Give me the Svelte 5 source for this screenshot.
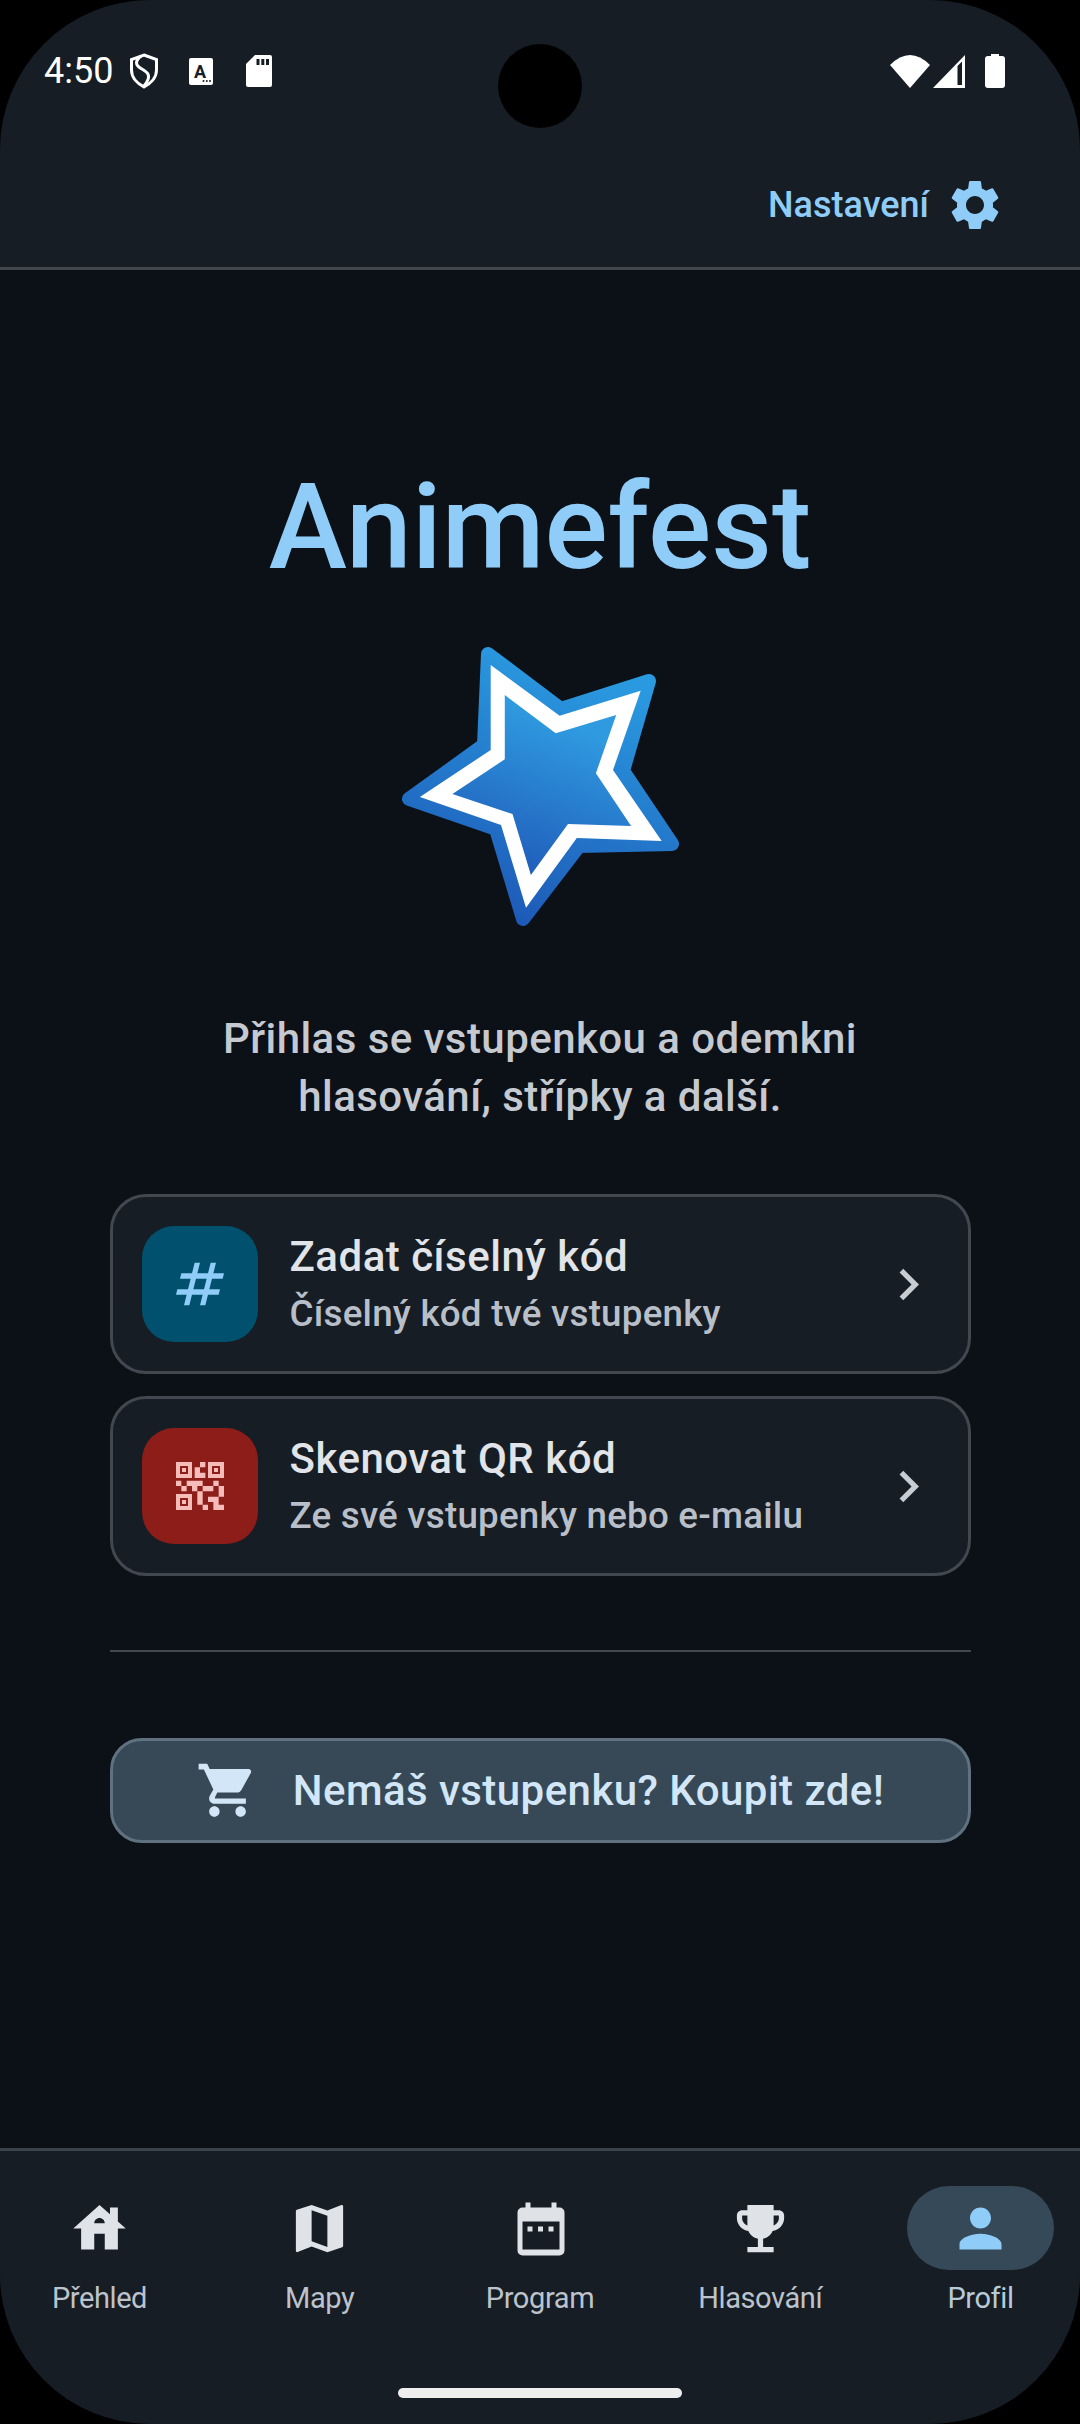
<script>
  const tabs = [
    { label: 'Přehled', d: 'M19 9.3V4h-3v2.6L12 3 2 12h3v8h5v-6h4v6h5v-8h3l-3-2.7zM10 10c0-1.1.9-2 2-2s2 .9 2 2h-4z' },
    { label: 'Mapy', d: 'M20.5 3l-.16.03L15 5.1 9 3 3.36 4.9c-.21.07-.36.25-.36.48V20.5c0 .28.22.5.5.5l.16-.03L9 18.9l6 2.1 5.64-1.9c.21-.07.36-.25.36-.48V3.5c0-.28-.22-.5-.5-.5zM15 19l-6-2.11V5l6 2.11V19z' },
    { label: 'Program', calendar: true },
    { label: 'Hlasování', d: 'M19 5h-2V3H7v2H5c-1.1 0-2 .9-2 2v1c0 2.55 1.92 4.63 4.39 4.94.63 1.5 1.98 2.63 3.61 2.96V19H7v2h10v-2h-4v-3.1c1.63-.33 2.98-1.46 3.61-2.96C19.08 12.63 21 10.55 21 8V7c0-1.1-.9-2-2-2zM5 8V7h2v3.82C5.84 10.4 5 9.3 5 8zm14 0c0 1.3-.84 2.4-2 2.82V7h2v1z' },
    { label: 'Profil', active: true, d: 'M12 12c2.21 0 4-1.79 4-4s-1.79-4-4-4-4 1.79-4 4 1.79 4 4 4zm0 2c-2.67 0-8 1.34-8 4v2h16v-2c0-2.66-5.33-4-8-4z' }
  ];

  const qr = 'M15 21h-2v-2h2v2zM13 14h-2v5h2v-5zM21 12h-2v4h2v-4zM19 10h-2v2h2v-2zM7 12H5v2h2v-2zM5 10H3v2h2v-2zM12 5h2V3h-2v2zM4.5 4.5v3h3v-3h-3zM9 9H3V3h6v6zM4.5 16.5v3h3v-3h-3zM9 21H3v-6h6v6zM16.5 4.5v3h3v-3h-3zM21 9h-6V3h6v6zM19 19v-3h-4v2h2v3h4v-2h-2zM17 12h-4v2h4v-2zM13 10H7v2h2v2h2v-2h2v-2zM14 9V7h-2V5h-2v4h4zM6.75 5.25h-1.5v1.5h1.5v-1.5zM6.75 17.25h-1.5v1.5h1.5v-1.5zM18.75 5.25h-1.5v1.5h1.5v-1.5z';
  const hash = 'M20.5 10l.5-2h-4l1-4h-2l-1 4h-4l1-4h-2L9 8H5l-.5 2h4l-1 4h-4L3 16h4l-1 4h2l1-4h4l-1 4h2l1-4h4l.5-2h-4l1-4h4zm-7 4h-4l1-4h4l-1 4z';
</script>

<div class="frame">
  <header>
    <div class="status">
      <span class="time">4:50</span>
      <svg class="shield" viewBox="0 0 30 36" width="30" height="36">
        <path d="M15 2 27.5 6.5V17C27.5 25 21 31 15 34 9 31 2.500 25 2.500 17V6.500Z" />
        <path d="M12 3C6 8 6 12 12 15.500 18 19 24 22 15 33" />
      </svg>
      <svg class="keyboard" viewBox="0 0 24 27" width="24" height="27">
        <rect width="24" height="27" rx="2" fill="#fff" />
        <text x="11" y="20" text-anchor="middle">A</text>
        <circle cx="14.500" cy="23" r="1" fill="#161d24" />
        <circle cx="17.800" cy="23" r="1" fill="#161d24" />
        <circle cx="21" cy="23" r="1" fill="#161d24" />
      </svg>
      <svg class="sd" viewBox="0 0 26 32" width="26" height="32">
        <path fill="#fff" d="M9 0H24a2 2 0 0 1 2 2V30a2 2 0 0 1-2 2H2a2 2 0 0 1-2-2V9Z" />
        <rect x="10.500" y="4" width="3" height="6" fill="#161d24" />
        <rect x="15.300" y="4" width="3" height="6" fill="#161d24" />
        <rect x="20" y="4" width="3" height="6" fill="#161d24" />
      </svg>
      <div class="status-right">
        <svg viewBox="0 0 40 33" width="40" height="33"><path fill="#fff" d="M0 10Q20-10 40 10L20 33Z" /></svg>
        <svg viewBox="0 0 33 33" width="33" height="33"><path fill="#fff" fill-rule="evenodd" d="M0 33 32 0V33ZM24.500 11V30H29V6.500Z" /></svg>
        <svg class="battery" viewBox="0 0 20 34" width="20" height="34">
          <path fill="#fff" d="M6 0H14V2H17A3 3 0 0 1 20 5V31A3 3 0 0 1 17 34H3A3 3 0 0 1 0 31V5A3 3 0 0 1 3 2H6Z" />
        </svg>
      </div>
    </div>
    <div class="bar">
      <span class="settings">Nastavení</span>
      <svg viewBox="0 0 24 24" width="60" height="60" fill="#8fcdf8">
        <path d="M19.14 12.94c.04-.3.06-.61.06-.94 0-.32-.02-.64-.07-.94l2.03-1.58c.18-.14.23-.41.12-.61l-1.92-3.32c-.12-.22-.37-.29-.59-.22l-2.39.96c-.5-.38-1.03-.7-1.62-.94l-.36-2.54c-.04-.24-.24-.41-.48-.41h-3.84c-.24 0-.43.17-.47.41l-.36 2.54c-.59.24-1.13.57-1.62.94l-2.39-.96c-.22-.08-.47 0-.59.22L2.74 8.87c-.12.21-.08.47.12.61l2.03 1.58c-.05.3-.09.63-.09.94s.02.64.07.94l-2.03 1.58c-.18.14-.23.41-.12.61l1.92 3.32c.12.22.37.29.59.22l2.39-.96c.5.38 1.03.7 1.62.94l.36 2.54c.05.24.24.41.48.41h3.84c.24 0 .44-.17.47-.41l.36-2.54c.59-.24 1.13-.56 1.62-.94l2.39.96c.22.08.47 0 .59-.22l1.92-3.32c.12-.22.07-.47-.12-.61l-2.01-1.58zM12 15.6c-1.98 0-3.6-1.62-3.6-3.6s1.62-3.6 3.6-3.6 3.6 1.62 3.6 3.6-1.62 3.6-3.6 3.6z" />
      </svg>
    </div>
  </header>

  <main>
    <h1>Animefest</h1>

    <svg class="star" viewBox="400 640 280 290" width="280" height="290">
      <defs>
        <linearGradient id="edge" gradientUnits="userSpaceOnUse" x1="590" y1="670" x2="500" y2="925">
          <stop offset="0" stop-color="#2a9ae0" />
          <stop offset="1" stop-color="#1d58b6" />
        </linearGradient>
        <linearGradient id="fill" gradientUnits="userSpaceOnUse" x1="570" y1="725" x2="510" y2="880">
          <stop offset="0" stop-color="#2f9ae0" />
          <stop offset="1" stop-color="#1f59b8" />
        </linearGradient>
      </defs>
      <polygon
        points="488,654 561,709 649,681 623,771 672,844 579,846 523,919 496,829 409,799 484,745"
        fill="url(#edge)" stroke="url(#edge)" stroke-width="14" stroke-linejoin="round"
      />
      <polygon fill="#fff" points="490.7,665 559.6,715.7 640.7,690.7 613,770 661.7,841 576.8,838 526,907.7 501,825 419.9,797 490.7,750" />
      <polygon fill="url(#fill)" points="504.8,695 555.7,733.3 616.2,715 595.9,773.3 631.1,826 568,824 530.9,875 512.5,814 452.4,794 504.8,759.3" />
    </svg>

    <p class="lead">Přihlas se vstupenkou a odemkni<br />hlasování, střípky a další.</p>

    <div class="cards">
      <div class="card">
        <div class="tile blue">
          <svg viewBox="0 0 24 24" width="64" height="64"><path d={hash} /></svg>
        </div>
        <div class="card-text">
          <div class="card-title">Zadat číselný kód</div>
          <div class="card-sub">Číselný kód tvé vstupenky</div>
        </div>
        <svg class="chev" viewBox="0 0 24 24" width="63" height="63"><path d="M10 6 8.590 7.410 13.170 12l-4.580 4.590L10 18l6-6z" /></svg>
      </div>
      <div class="card">
        <div class="tile red">
          <svg viewBox="0 0 24 24" width="64" height="64"><path d={qr} /></svg>
        </div>
        <div class="card-text">
          <div class="card-title">Skenovat QR kód</div>
          <div class="card-sub">Ze své vstupenky nebo e-mailu</div>
        </div>
        <svg class="chev" viewBox="0 0 24 24" width="63" height="63"><path d="M10 6 8.590 7.410 13.170 12l-4.580 4.590L10 18l6-6z" /></svg>
      </div>
    </div>

    <div class="divider"></div>

    <div class="buy">
      <svg viewBox="0 0 24 24" width="63" height="63">
        <path d="M7 18c-1.100 0-1.990.9-1.990 2S5.900 22 7 22s2-.9 2-2-.9-2-2-2zM1 2v2h2l3.600 7.590-1.350 2.450c-.16.28-.25.61-.25.96 0 1.100.9 2 2 2h12v-2H7.420c-.14 0-.25-.11-.25-.25l.03-.12.9-1.830h7.450c.75 0 1.410-.41 1.750-1.030l3.580-6.470c.08-.14.12-.31.12-.48 0-.55-.45-1-1-1H5.210l-.94-2H1zm16 16c-1.100 0-1.990.9-1.990 2s.89 2 1.990 2 2-.9 2-2-.9-2-2-2z" />
      </svg>
      <span>Nemáš vstupenku? Koupit zde!</span>
    </div>
  </main>

  <nav>
    <div class="tabs">
      {#each tabs as tab}
        <div class="tab" class:active={tab.active}>
          <div class="pill">
            {#if tab.calendar}
              <svg viewBox="0 0 63 63" width="63" height="63">
                <path fill-rule="evenodd" d="M16.500 5.500H21.500V10.500H42.500V5.500H47.500V10.500H50.500A5 5 0 0 1 55.500 15.500V53.500A5 5 0 0 1 50.500 58.500H13.500A5 5 0 0 1 8.500 53.500V15.500A5 5 0 0 1 13.500 10.500H16.500ZM13.500 24.500V52.500H50.500V24.500ZM18.500 29.500H23.500V34.500H18.500ZM29 29.500H34V34.500H29ZM39.500 29.500H44.500V34.500H39.500Z" />
              </svg>
            {:else}
              <svg viewBox="0 0 24 24" width="63" height="63"><path d={tab.d} /></svg>
            {/if}
          </div>
          <span>{tab.label}</span>
        </div>
      {/each}
    </div>
    <div class="home-bar"></div>
  </nav>

  <div class="camera"></div>
</div>

<style>
  :global(body) {
    background: #000;
  }

  .frame {
    position: relative;
    width: 1080px;
    height: 2424px;
    display: flex;
    flex-direction: column;
    overflow: hidden;
    border-radius: 150px;
    background: #0c1017;
    font-family: Roboto, sans-serif;
  }

  header {
    height: 270px;
    box-sizing: border-box;
    background: #161d24;
    border-bottom: 3px solid #3f464e;
  }

  .status {
    height: 142px;
    display: flex;
    align-items: center;
    padding: 0 75px 0 44px;
  }

  .time {
    font-size: 36px;
    color: #fff;
  }

  .shield {
    margin-left: 16px;
    fill: none;
    stroke: #fff;
    stroke-width: 3;
  }

  .keyboard {
    margin-left: 30px;
  }

  .keyboard text {
    font-size: 18px;
    font-weight: 700;
    font-family: Roboto, sans-serif;
    fill: #161d24;
  }

  .sd {
    margin-left: 33px;
  }

  .status-right {
    margin-left: auto;
    display: flex;
    align-items: center;
    gap: 3px;
  }

  .battery {
    margin-left: 16px;
  }

  .bar {
    height: 125px;
    display: flex;
    align-items: center;
    justify-content: flex-end;
    gap: 16px;
    padding-right: 75px;
  }

  .settings {
    font-size: 36px;
    font-weight: 500;
    color: #8fcdf8;
  }

  main {
    flex: 1;
    display: flex;
    flex-direction: column;
    align-items: center;
  }

  h1 {
    margin: 193px 0 0;
    font-size: 118px;
    line-height: 130px;
    font-weight: 500;
    color: #8fcdf8;
  }

  .star {
    margin-top: 47px;
    display: block;
  }

  .lead {
    margin: 80px 0 0;
    text-align: center;
    font-size: 42px;
    line-height: 58px;
    font-weight: 500;
    letter-spacing: 0.45px;
    color: #c5c9d0;
  }

  .cards {
    margin-top: 68px;
    width: 861px;
    display: flex;
    flex-direction: column;
    gap: 22px;
  }

  .card {
    height: 180px;
    box-sizing: border-box;
    display: flex;
    align-items: center;
    padding: 0 28px 0 29px;
    gap: 32px;
    background: #161d24;
    border: 3px solid #42484f;
    border-radius: 36px;
  }

  .tile {
    width: 116px;
    height: 116px;
    display: flex;
    align-items: center;
    justify-content: center;
    border-radius: 32px;
  }

  .tile.blue {
    background: #01506d;
    fill: #8fcdf8;
  }

  .tile.red {
    background: #8c1d18;
    fill: #f6bcb9;
  }

  .card-text {
    flex: 1;
  }

  .card-title {
    margin-bottom: 4px;
    font-size: 42px;
    line-height: 56px;
    font-weight: 500;
    letter-spacing: 0.5px;
    color: #e1e4e9;
  }

  .card-sub {
    font-size: 36.75px;
    line-height: 50px;
    letter-spacing: 0.22px;
    color: #b8bfc9;
    font-weight: 500;
  }

  .chev {
    fill: #c8cdd4;
  }

  .divider {
    margin-top: 74px;
    width: 861px;
    height: 2px;
    background: #42484f;
  }

  .buy {
    margin-top: 86px;
    width: 861px;
    height: 105px;
    box-sizing: border-box;
    display: flex;
    align-items: center;
    justify-content: center;
    gap: 34px;
    background: #374957;
    border: 3px solid #60727f;
    border-radius: 32px;
    fill: #d2e6f7;
    color: #d2e6f7;
    font-size: 42px;
    font-weight: 500;
    letter-spacing: 0.45px;
  }

  nav {
    height: 276px;
    box-sizing: border-box;
    background: #161d24;
    border-top: 3px solid #3c444b;
    display: flex;
    flex-direction: column;
    align-items: center;
  }

  .tabs {
    align-self: stretch;
    display: flex;
    justify-content: space-between;
    padding: 35px 26px 0;
  }

  .tab {
    width: 147px;
    display: flex;
    flex-direction: column;
    align-items: center;
    font-size: 29px;
    line-height: 40px;
    letter-spacing: -0.4px;
    color: #bcc3cc;
    white-space: nowrap;
  }

  .pill {
    width: 147px;
    height: 84px;
    margin-bottom: 8px;
    display: flex;
    align-items: center;
    justify-content: center;
    border-radius: 42px;
    fill: #dfe2e7;
  }

  .tab.active {
    color: #b7cad9;
  }

  .tab.active .pill {
    background: #364958;
    fill: #8fcdf8;
  }

  .home-bar {
    margin-top: 70px;
    width: 284px;
    height: 10px;
    border-radius: 5px;
    background: #eee;
  }

  .camera {
    position: absolute;
    left: 498px;
    top: 44px;
    width: 84px;
    height: 84px;
    border-radius: 50%;
    background: #000;
  }
</style>
